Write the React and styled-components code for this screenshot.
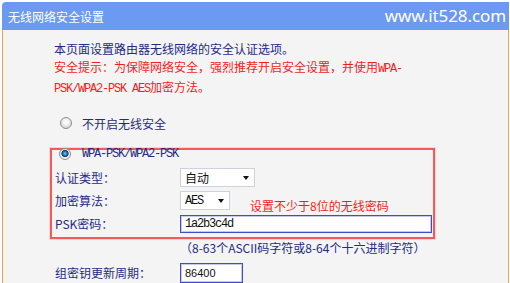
import React from 'react'
import styled, { createGlobalStyle } from 'styled-components'

const GlobalStyle = createGlobalStyle`
  html, body {
    margin: 0;
    padding: 0;
    background: #ffffff;
    overflow: hidden;
  }
  body {
    font-family: "Noto Sans CJK SC", "Noto Sans", sans-serif;
  }
`

const Panel = styled.div`
  margin: 2px 1px 0 2px;
  width: 507px;
`

const Header = styled.div`
  height: 28px;
  background: #6c9af2;
  border-radius: 4px 0 0 0;
  display: flex;
  align-items: center;
  justify-content: space-between;
  padding: 0 3px 0 6px;
  color: #ffffff;
`

const Title = styled.span`
  font-size: 12px;
  line-height: 14px;
  margin-top: 2px;
`

const Site = styled.span`
  font-family: "Noto Sans", "Open Sans", sans-serif;
  font-size: 17px;
  line-height: 20px;
  letter-spacing: -0.1px;
`

const Body = styled.div`
  background: #f4f4f4;
  border-left: 1px solid #f5a04c;
  border-right: 1px solid #f5a04c;
  padding: 10px 0 1px 51px;
  color: #1f2b84;
  font-size: 12px;
`

const Line = styled.div`
  line-height: 18px;
  white-space: nowrap;
  color: ${p => (p.$warn ? '#f21d1d' : '#1f2b84')};
`

// half-width latin like the router's bitmap font: 6px per character
const Mono = styled.span`
  font-family: "Liberation Mono", monospace;
  font-size: 12px;
  letter-spacing: -1.2px;
  font-weight: ${p => (p.$bold ? 600 : 400)};
  color: inherit;
`

const RadioRow = styled.div`
  display: flex;
  align-items: center;
  height: ${p => p.$h || 18}px;
  margin-top: ${p => p.$mt || 0}px;
  padding-left: ${p => p.$indent}px;
  gap: ${p => p.$gap}px;
`

const Radio = styled.span`
  width: 12px;
  height: 12px;
  border-radius: 50%;
  box-sizing: border-box;
  border: 1px solid #8e8e8e;
  background: ${p =>
    p.$checked
      ? 'radial-gradient(circle at 50% 45%, #7fd0ff 0, #2a86c8 1.6px, #153e6a 3.2px, #e8e8e8 4px, #f8f8f8 6px)'
      : 'radial-gradient(circle at 50% 40%, #ffffff 0, #f0f0f0 3px, #d4d4d4 6px)'};
  flex-shrink: 0;
`

const Box = styled.div`
  margin: 16px 0 0 -4px;
  width: 385px;
  box-sizing: border-box;
  border: 2px solid #f55a5a;
  box-shadow: 0 0 0 1px rgba(245, 90, 90, 0.2);
  padding: 0 0 2px 3px;
`

const FieldRow = styled.div`
  display: flex;
  align-items: center;
  height: 23px;
  margin-top: ${p => p.$mt || 0}px;
  margin-left: ${p => p.$ml || 0}px;
`

const Label = styled.span`
  width: 125px;
  flex-shrink: 0;
  line-height: 16px;
`

const Select = styled.div`
  width: ${p => p.$w}px;
  height: ${p => p.$h}px;
  box-sizing: border-box;
  background: #ffffff;
  border: 1px solid #cfd2de;
  display: flex;
  align-items: center;
  justify-content: space-between;
  padding: 0 5px 0 4px;
  color: #111111;
`

const Arrow = styled.span`
  width: 0;
  height: 0;
  border-left: 3.5px solid transparent;
  border-right: 3.5px solid transparent;
  border-top: 4px solid #111111;
`

const Input = styled.input`
  width: ${p => p.$w}px;
  height: ${p => p.$h}px;
  box-sizing: border-box;
  margin: 0;
  border: 1px solid #3f4dc6;
  box-shadow: inset 0 0 0 1px rgba(63, 77, 198, 0.3);
  background: #ffffff;
  padding: 0 4px;
  color: #111111;
  font-family: ${p => (p.$mono ? '"Liberation Mono", monospace' : '"Liberation Sans", sans-serif')};
  font-size: ${p => (p.$mono ? 12 : 11)}px;
  letter-spacing: ${p => (p.$mono ? '-1.2px' : '0')};
  outline: none;
`

const Hint = styled.span`
  align-self: flex-start;
  margin: 10px 0 0 20px;
  line-height: 14px;
  color: #f21d1d;
  white-space: nowrap;
`

const Note = styled.div`
  margin-left: 126px;
  line-height: 18px;
  white-space: nowrap;
`

export default function App() {
  return (
    <>
      <GlobalStyle />
      <Panel>
        <Header>
          <Title>无线网络安全设置</Title>
          <Site>www.it528.com</Site>
        </Header>
        <Body>
          <Line>本页面设置路由器无线网络的安全认证选项。</Line>
          <Line $warn>
            安全提示：为保障网络安全，强烈推荐开启安全设置，并使用<Mono>WPA-</Mono>
          </Line>
          <Line $warn>
            <Mono>PSK/WPA2-PSK AES</Mono>加密方法。
          </Line>
          <RadioRow $mt={16} $indent={6} $gap={10}>
            <Radio />
            <span>不开启无线安全</span>
          </RadioRow>
          <Box>
            <RadioRow $h={12} $mt={-2} $indent={4} $gap={11}>
              <Radio $checked />
              <Mono>WPA-PSK/WPA2-PSK</Mono>
            </RadioRow>
            <FieldRow $mt={6}>
              <Label>认证类型：</Label>
              <Select $w={75} $h={19}>
                <span>自动</span>
                <Arrow />
              </Select>
            </FieldRow>
            <FieldRow>
              <Label>加密算法：</Label>
              <Select $w={50} $h={19}>
                <Mono>AES</Mono>
                <Arrow />
              </Select>
              <Hint>设置不少于8位的无线密码</Hint>
            </FieldRow>
            <FieldRow>
              <Label>PSK密码：</Label>
              <Input $w={252} $h={18} $mono readOnly value="1a2b3c4d" />
            </FieldRow>
          </Box>
          <Note>（8-63个ASCII码字符或8-64个十六进制字符）</Note>
          <FieldRow $mt={4} $ml={1}>
            <Label>组密钥更新周期：</Label>
            <Input $w={63} $h={20} readOnly value="86400" />
          </FieldRow>
        </Body>
      </Panel>
    </>
  )
}
